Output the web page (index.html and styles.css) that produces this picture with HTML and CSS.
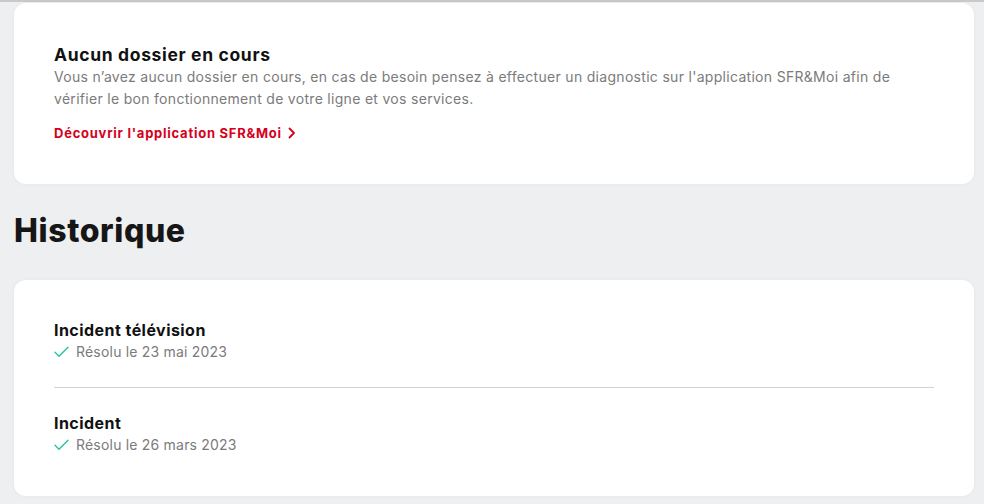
FILE: index.html
```html
<!DOCTYPE html>
<html lang="fr">
<head>
<meta charset="utf-8">
<title>Suivi</title>
<link rel="stylesheet" href="styles.css">
</head>
<body>
<div class="topline"></div>
<main class="page">
  <section class="card card-empty">
    <h2 class="card-title">Aucun dossier en cours</h2>
    <p class="card-text">Vous n’avez aucun dossier en cours, en cas de besoin pensez à effectuer un diagnostic sur l'application SFR&amp;Moi afin de<br>vérifier le bon fonctionnement de votre ligne et vos services.</p>
    <a class="card-link" href="#">Découvrir l'application SFR&amp;Moi
      <svg class="chev" width="8" height="12" viewBox="0 0 8 12"><path d="M1.5 1.5 L6 6 L1.5 10.5" fill="none" stroke="#d7001b" stroke-width="1.8" stroke-linecap="round" stroke-linejoin="round"/></svg>
    </a>
  </section>

  <h1 class="section-title">Historique</h1>

  <section class="card card-history">
    <div class="item">
      <h3 class="item-title">Incident télévision</h3>
      <div class="item-status">
        <svg class="check" width="15" height="12" viewBox="0 0 15 12"><path d="M1 6.2 L5 10.2 L14 1.2" fill="none" stroke="#1fc39a" stroke-width="1.3" stroke-linecap="round" stroke-linejoin="round"/></svg>
        <span>Résolu le 23 mai 2023</span>
      </div>
    </div>
    <hr class="divider">
    <div class="item">
      <h3 class="item-title">Incident</h3>
      <div class="item-status">
        <svg class="check" width="15" height="12" viewBox="0 0 15 12"><path d="M1 6.2 L5 10.2 L14 1.2" fill="none" stroke="#1fc39a" stroke-width="1.3" stroke-linecap="round" stroke-linejoin="round"/></svg>
        <span>Résolu le 26 mars 2023</span>
      </div>
    </div>
  </section>
</main>
</body>
</html>
```

FILE: styles.css
```css
html, body {
  margin: 0;
  padding: 0;
}
body {
  background: #eeeff1;
  font-family: Inter, "Noto Sans", sans-serif;
  color: #111;
  height: 504px;
  overflow: hidden;
}
.topline {
  height: 2px;
  background: #c9c9cb;
}
.page {
  padding: 1px 10px 0 14px;
}
.card {
  background: #fff;
  border-radius: 12px;
  box-shadow: 0 0 4px rgba(0,0,0,0.04);
}
.card-empty {
  padding: 40px 40px 41px;
}
.card-title {
  margin: 0;
  font-size: 17.5px;
  line-height: 23px;
  font-weight: 700;
  letter-spacing: 0.65px;
  color: #111;
}
.card-text {
  margin: 0;
  font-size: 14px;
  line-height: 22px;
  letter-spacing: 0.3px;
  color: #7b7b7b;
}
.card-link {
  display: inline-flex;
  align-items: center;
  gap: 6px;
  margin-top: 13px;
  font-size: 13px;
  line-height: 20px;
  font-weight: 700;
  letter-spacing: 0.75px;
  color: #d7001b;
  text-decoration: none;
}
.section-title {
  margin: 27px 0 29px;
  font-size: 32px;
  line-height: 40px;
  font-weight: 800;
  letter-spacing: 0.6px;
  color: #161616;
}
.card-history {
  padding: 39px 40px 40px;
}
.item-title {
  margin: 0;
  font-size: 16px;
  line-height: 22px;
  font-weight: 700;
  letter-spacing: 0.45px;
  color: #111;
}
.item-status {
  display: flex;
  align-items: center;
  gap: 7px;
  font-size: 14px;
  line-height: 22px;
  letter-spacing: 0.2px;
  color: #7b7b7b;
}
.divider {
  margin: 24px 0;
  border: 0;
  border-top: 1px solid #d2d2d2;
}
```
